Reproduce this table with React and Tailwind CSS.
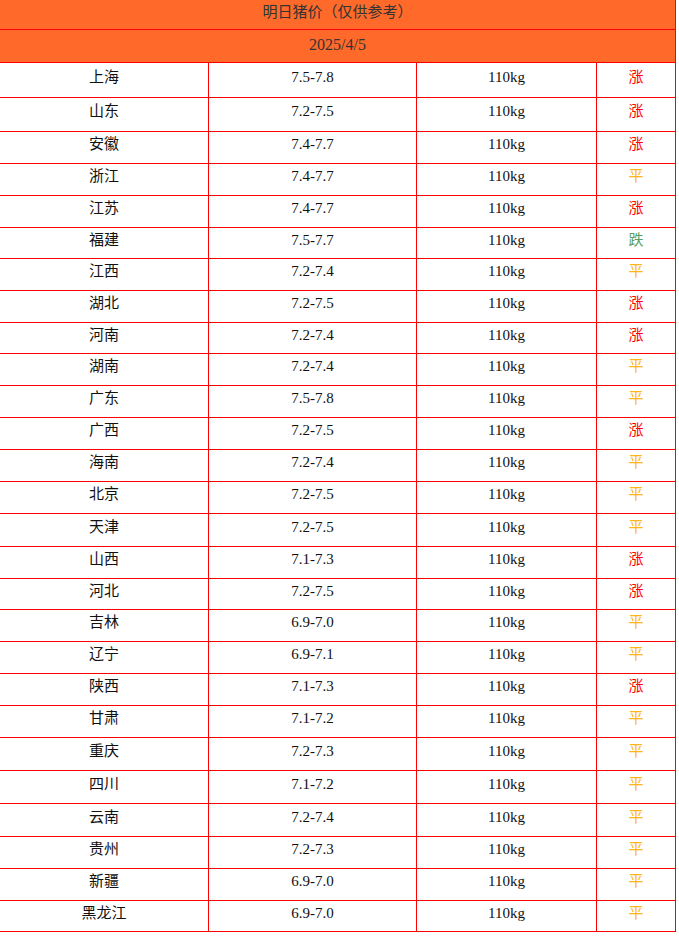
import React from "react";

const rows = [
  ["上海", "7.5-7.8", "涨", "h-[35px]"],
  ["山东", "7.2-7.5", "涨", "h-[34px]"],
  ["安徽", "7.4-7.7", "涨", "h-[32px]"],
  ["浙江", "7.4-7.7", "平", "h-[32px]"],
  ["江苏", "7.4-7.7", "涨", "h-[32px]"],
  ["福建", "7.5-7.7", "跌", "h-[31px]"],
  ["江西", "7.2-7.4", "平", "h-[32px]"],
  ["湖北", "7.2-7.5", "涨", "h-[32px]"],
  ["河南", "7.2-7.4", "涨", "h-[31px]"],
  ["湖南", "7.2-7.4", "平", "h-[32px]"],
  ["广东", "7.5-7.8", "平", "h-[32px]"],
  ["广西", "7.2-7.5", "涨", "h-[32px]"],
  ["海南", "7.2-7.4", "平", "h-[32px]"],
  ["北京", "7.2-7.5", "平", "h-[32px]"],
  ["天津", "7.2-7.5", "平", "h-[33px]"],
  ["山西", "7.1-7.3", "涨", "h-[32px]"],
  ["河北", "7.2-7.5", "涨", "h-[31px]"],
  ["吉林", "6.9-7.0", "平", "h-[32px]"],
  ["辽宁", "6.9-7.1", "平", "h-[32px]"],
  ["陕西", "7.1-7.3", "涨", "h-[32px]"],
  ["甘肃", "7.1-7.2", "平", "h-[32px]"],
  ["重庆", "7.2-7.3", "平", "h-[33px]"],
  ["四川", "7.1-7.2", "平", "h-[33px]"],
  ["云南", "7.2-7.4", "平", "h-[33px]"],
  ["贵州", "7.2-7.3", "平", "h-[32px]"],
  ["新疆", "6.9-7.0", "平", "h-[32px]"],
  ["黑龙江", "6.9-7.0", "平", "h-[31px]"],
];

const trendColor = {
  涨: "text-[#ff0000]",
  平: "text-[#ffb515]",
  跌: "text-[#5c9e5c]",
};

const App = () => {
  return (
    <div
      className="w-[679px] min-h-[946px] bg-white text-[15px] text-[#111]"
      style={{ fontFamily: '"Liberation Serif", "Noto Sans CJK SC", serif' }}
    >
      <div className="w-[676px]">
        {/* Header */}
        <div className="h-[30px] bg-[#ff6a2a] border-r border-b border-[#ff0000] flex items-center justify-center pb-[4px] text-[#333]">
          明日猪价（仅供参考）
        </div>
        <div className="h-[33px] bg-[#ff6a2a] border-r border-b border-[#ff0000] flex items-center justify-center pb-[2px] text-[#333] text-[16px]">
          2025/4/5
        </div>

        {/* Rows */}
        {rows.map(([city, price, trend, h]) => (
          <div key={city} className={`grid grid-cols-[209px_208px_180px_79px] ${h}`}>
            <div className="border-r border-b border-[#ff0000] flex items-center justify-center pb-[6px]">
              {city}
            </div>
            <div className="border-r border-b border-[#ff0000] flex items-center justify-center pb-[6px]">
              {price}
            </div>
            <div className="border-r border-b border-[#ff0000] flex items-center justify-center pb-[6px]">
              110kg
            </div>
            <div
              className={`border-r border-b border-[#ff0000] flex items-center justify-center pb-[6px] ${trendColor[trend]}`}
            >
              {trend}
            </div>
          </div>
        ))}
      </div>
    </div>
  );
};

export default App;
